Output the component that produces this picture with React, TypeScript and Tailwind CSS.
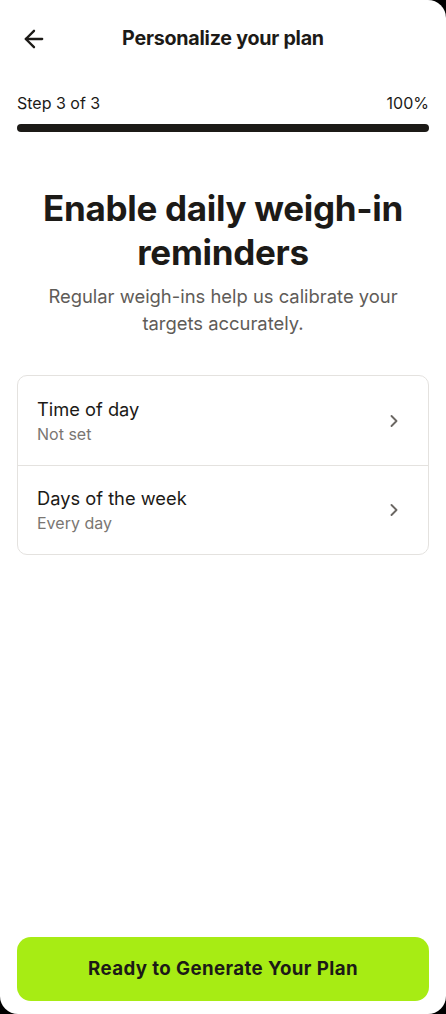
import { ArrowLeft, ChevronRight } from 'lucide-react'

export default function App() {
  const rows = [
    { title: 'Time of day', value: 'Not set' },
    { title: 'Days of the week', value: 'Every day' },
  ]

  return (
    <div className="bg-black h-[1014px] w-[446px]" style={{ fontFamily: 'Inter, "Noto Sans", sans-serif' }}>
      <div className="bg-white h-full w-full flex flex-col rounded-tr-[18px] rounded-b-[18px] text-[#1c1a17]">
        {/* Header */}
        <div className="relative h-[78px] flex items-center justify-center">
          <button className="absolute left-[20px] top-[25px]">
            <ArrowLeft className="w-[28px] h-[28px]" strokeWidth={2} />
          </button>
          <h1 className="text-[19.7px] font-bold tracking-[-0.25px]">Personalize your plan</h1>
        </div>

        {/* Progress */}
        <div className="px-[17px]">
          <div className="flex justify-between items-center text-[16px] leading-[20px] mt-[15px]">
            <span>Step 3 of 3</span>
            <span>100%</span>
          </div>
          <div className="mt-[11px] h-[8px] rounded-full bg-[#1c1a17]" />
        </div>

        {/* Intro */}
        <div className="px-[17px] text-center mt-[54px]">
          <h2 className="text-[35px] leading-[44px] font-bold tracking-[-0.3px]">
            Enable daily weigh-in reminders
          </h2>
          <p className="mt-[9px] text-[18.4px] leading-[27px] text-[#5f5c58] px-[20px]">
            Regular weigh-ins help us calibrate your targets accurately.
          </p>
        </div>

        {/* Settings card */}
        <div className="mx-[17px] mt-[38px] border border-[#e4e2df] rounded-[10px]">
          {rows.map((r, i) => (
            <div
              key={r.title}
              className={`flex items-center justify-between h-[89px] pl-[19px] pr-[24px] ${i > 0 ? 'border-t border-[#e4e2df]' : ''}`}
            >
              <div>
                <div className="text-[18.3px] leading-[24px]">{r.title}</div>
                <div className="text-[16px] leading-[22px] text-[#7a7672] mt-[2px]">{r.value}</div>
              </div>
              <ChevronRight className="w-[20px] h-[20px] text-[#6b6763]" strokeWidth={2.25} />
            </div>
          ))}
        </div>

        {/* CTA */}
        <div className="mt-auto px-[17px] pb-[13px]">
          <button className="w-full h-[64px] rounded-[14px] bg-[#a7ec14] text-[18.7px] font-bold tracking-[0.4px] text-[#1c1a17]">
            Ready to Generate Your Plan
          </button>
        </div>
      </div>
    </div>
  )
}
